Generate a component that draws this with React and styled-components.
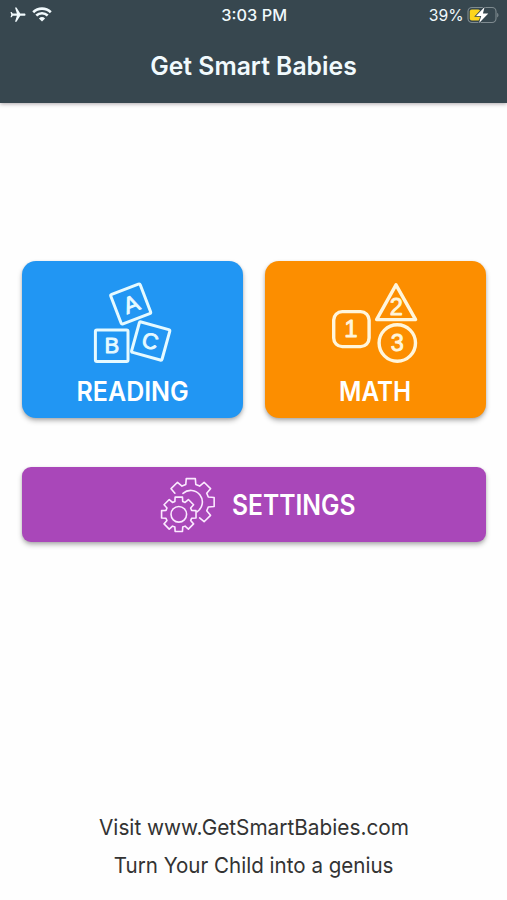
import React from 'react';
import styled, { createGlobalStyle } from 'styled-components';
import { MdFlight } from 'react-icons/md';

const GlobalStyle = createGlobalStyle`
    * {
        box-sizing: border-box;
    }
    body {
        margin: 0;
        background: #fefefe;
        font-family: Inter, 'Liberation Sans', sans-serif;
    }
`;

const Screen = styled.div`
    display: flex;
    flex-direction: column;
    height: 900px;
    overflow: hidden;
`;

const Header = styled.header`
    flex: none;
    height: 103px;
    background: #37474f;
    color: #f1fafd;
    box-shadow: 0 1px 4px rgba(50, 35, 45, 0.4);
`;

const StatusBar = styled.div`
    display: grid;
    grid-template-columns: 1fr auto 1fr;
    align-items: center;
    height: 29px;
    padding: 0 8px 0 9px;
`;

const StatusGroup = styled.div`
    display: flex;
    align-items: center;
    justify-content: ${props => (props.$end ? 'flex-end' : 'flex-start')};
    gap: ${props => props.$gap}px;
`;

const Plane = styled(MdFlight)`
    width: 18px;
    height: 18px;
    transform: rotate(90deg);
`;

// 글자 폭은 $stretch 로 조절
const Label = styled.span`
    display: inline-block;
    font-size: ${props => props.$size}px;
    font-weight: ${props => props.$weight || 400};
    line-height: ${props => props.$line}px;
    white-space: nowrap;
    transform: scaleX(${props => props.$stretch || 1});
    transform-origin: ${props => props.$origin || 'center'};
`;

const Title = styled.h1`
    display: flex;
    justify-content: center;
    margin: 0;
    padding-top: 20px;
`;

const Main = styled.main`
    flex: 1;
    display: flex;
    flex-direction: column;
    padding: 158px 21px 0 22px;
`;

const Cards = styled.div`
    display: grid;
    grid-template-columns: 1fr 1fr;
    column-gap: 22px;
`;

const Tile = styled.button`
    display: flex;
    border: 0;
    padding: 0;
    align-items: center;
    font-family: inherit;
    color: #fff;
    background: ${props => props.$color};
    box-shadow: 0 3px 5px rgba(0, 0, 0, 0.26), 0 1px 3px rgba(0, 0, 0, 0.12);
`;

const Card = styled(Tile)`
    flex-direction: column;
    height: 157px;
    padding-top: 17px;
    border-radius: 14px;
    gap: 8px;
`;

const SettingsTile = styled(Tile)`
    height: 75px;
    margin-top: 49px;
    padding-left: 137px;
    gap: 15px;
    border-radius: 9px;
`;

const Footer = styled.footer`
    display: flex;
    flex-direction: column;
    align-items: center;
    height: 92px;
    color: #333;
`;

const Glyph = styled.text`
    font-family: 'Liberation Sans', Arial, sans-serif;
    font-size: ${props => props.$size}px;
    text-anchor: middle;
    fill: currentColor;
    stroke: currentColor;
    stroke-width: 0.9px;
`;

const Drawing = styled.svg`
    display: block;
    flex: none;
    fill: none;
    color: ${props => props.$tint};
    stroke: currentColor;
    stroke-width: ${props => props.$line}px;
    stroke-linejoin: round;
    stroke-linecap: round;
`;

const WifiIcon = () => (
    <svg width="20" height="15" viewBox="0 0 20 15" fill="none" stroke="currentColor" strokeWidth="2.6">
        <path d="M1.2 5.2a12.6 12.6 0 0 1 17.6 0" />
        <path d="M4.3 8.5a8.2 8.2 0 0 1 11.4 0" />
        <path d="M10 14.6 6.9 11.5a4.5 4.5 0 0 1 6.2 0z" fill="currentColor" stroke="none" />
    </svg>
);

const BatteryIcon = () => (
    <svg width="32" height="18" viewBox="0 0 32 18">
        <rect x="1" y="1.5" width="28" height="15" rx="4" fill="none" stroke="#7f8b90" strokeWidth="1.1" />
        <path d="M30.2 6.7c1.7.8 1.7 4 0 4.8z" fill="#7f8b90" />
        <rect x="2.8" y="3.4" width="10.4" height="11.2" rx="2" fill="#fdd51c" />
        <path
            d="M17.6 .9 9 10h5.2l-2.1 7 9.2-9.6h-5.4z"
            fill="#fff"
            stroke="#37474f"
            strokeWidth="1.6"
            paintOrder="stroke"
        />
    </svg>
);

const BlocksIcon = () => (
    <Drawing width="80" height="88" viewBox="0 0 80 88" $tint="#e6faff" $line={3}>
        <g transform="translate(37.7 26) rotate(-21)">
            <rect x="-15.8" y="-15.8" width="31.6" height="31.6" rx="1.5" />
            <Glyph $size={23} x="0.5" y="8.2">A</Glyph>
        </g>
        <rect x="2.4" y="52" width="32.6" height="31.5" rx="1.5" />
        <Glyph $size={22} x="18.8" y="75.4">B</Glyph>
        <g transform="translate(57.7 63) rotate(15.5)">
            <rect x="-15.8" y="-15.8" width="31.6" height="31.6" rx="1.5" />
            <Glyph $size={22} x="-0.5" y="7.7">C</Glyph>
        </g>
    </Drawing>
);

const ShapesIcon = () => (
    <Drawing width="90" height="88" viewBox="0 0 90 88" $tint="#fff6dc" $line={3.4}>
        <rect x="2.7" y="33.6" width="35.4" height="35" rx="8.5" />
        <Glyph $size={24} x="20" y="59.4">1</Glyph>
        <path d="M65 6.8 84.6 41.6H45.6z" />
        <Glyph $size={23.5} x="65.2" y="37">2</Glyph>
        <circle cx="66.3" cy="65" r="18.2" />
        <Glyph $size={23.5} x="66.4" y="72.8">3</Glyph>
    </Drawing>
);

// 톱니 윤곽선, from~to 는 톱니 번호 (0 = 위쪽, 시계방향)
const gearPath = (cx, cy, outer, root, half, from, to) => {
    const points = [];
    for (let i = from; i <= to; i++) {
        [[root, -half - 2], [outer, -half + 3], [outer, half - 3], [root, half + 2]].forEach(([r, a]) => {
            const rad = ((i * 45 + a) * Math.PI) / 180;
            points.push(`${(cx + r * Math.sin(rad)).toFixed(2)} ${(cy - r * Math.cos(rad)).toFixed(2)}`);
        });
    }
    return 'M' + points.join('L');
};

const GearsIcon = () => (
    <Drawing width="58" height="58" viewBox="0 0 58 58" $tint="#fbe9ff" $line={1.6}>
        <path d={gearPath(31.8, 26, 23.8, 18.2, 14, -1, 3)} />
        <path d="M24 17.4A11.6 11.6 0 1 1 38 35.8" />
        <path d={gearPath(19.8, 38.3, 17.6, 13.4, 15, 0, 7) + 'z'} />
        <circle cx="19.8" cy="38.3" r="7.8" />
    </Drawing>
);

class App extends React.Component {
    render() {
        const menu = [
            { name: 'READING', color: '#2196f3', icon: <BlocksIcon />, stretch: 0.925 },
            { name: 'MATH', color: '#fc8e00', icon: <ShapesIcon />, stretch: 0.9 },
        ];

        return (
            <Screen>
                <GlobalStyle />
                <Header>
                    <StatusBar>
                        <StatusGroup $gap={5}>
                            <Plane />
                            <WifiIcon />
                        </StatusGroup>
                        <Label $size={16} $line={28} $weight={500} $stretch={1.02}>3:03 PM</Label>
                        <StatusGroup $end $gap={3}>
                            <Label $size={16.5} $line={28} $origin="right" $stretch={0.95}>39%</Label>
                            <BatteryIcon />
                        </StatusGroup>
                    </StatusBar>
                    <Title>
                        <Label $size={25.5} $line={34} $weight={600} $stretch={0.97}>Get Smart Babies</Label>
                    </Title>
                </Header>
                <Main>
                    <Cards>
                        {menu.map(item => (
                            <Card key={item.name} $color={item.color}>
                                {item.icon}
                                <Label $size={27} $line={36} $weight={600} $stretch={item.stretch}>{item.name}</Label>
                            </Card>
                        ))}
                    </Cards>
                    <SettingsTile $color="#a947b9">
                        <GearsIcon />
                        <Label $size={28} $line={36} $weight={600} $origin="left" $stretch={0.88}>SETTINGS</Label>
                    </SettingsTile>
                </Main>
                <Footer>
                    <Label $size={22} $line={38} $stretch={0.945}>Visit www.GetSmartBabies.com</Label>
                    <Label $size={22} $line={38} $stretch={0.935}>Turn Your Child into a genius</Label>
                </Footer>
            </Screen>
        );
    }
}

export default App;
